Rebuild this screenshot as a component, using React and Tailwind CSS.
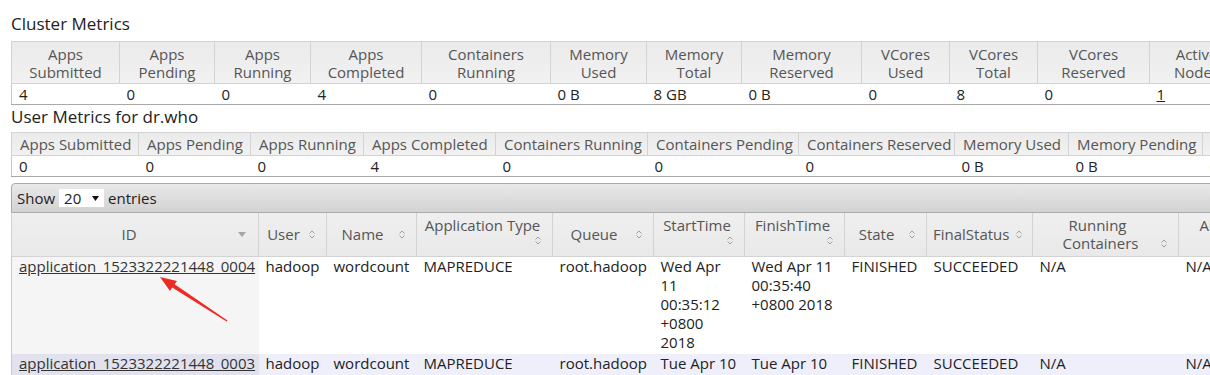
import React from "react";

const FONT = { fontFamily: '"Open Sans", "Noto Sans", sans-serif' };

const clusterCols = [
  ["Apps", "Submitted", 108],
  ["Apps", "Pending", 95],
  ["Apps", "Running", 96],
  ["Apps", "Completed", 111],
  ["Containers", "Running", 129],
  ["Memory", "Used", 96],
  ["Memory", "Total", 95],
  ["Memory", "Reserved", 120],
  ["VCores", "Used", 88],
  ["VCores", "Total", 88],
  ["VCores", "Reserved", 112],
  ["Active", "Nodes", 94],
  ["Decommissioned", "Nodes", 150],
  ["Lost", "Nodes", 90],
];
const clusterVals = ["4", "0", "0", "4", "0", "0 B", "8 GB", "0 B", "0", "8", "0", "1", "0", "0"];

const userCols = [
  ["Apps Submitted", 127],
  ["Apps Pending", 112],
  ["Apps Running", 113],
  ["Apps Completed", 132],
  ["Containers Running", 152],
  ["Containers Pending", 151],
  ["Containers Reserved", 156],
  ["Memory Used", 114],
  ["Memory Pending", 134],
  ["Memory Reserved", 150],
];
const userVals = ["0", "0", "0", "4", "0", "0", "0", "0 B", "0 B", "0 B"];

// kind: "line" text + icon on one row, "wrap" text then icon bottom-right, "two" two lines with icon on 2nd
const appCols = [
  { label: "ID", w: 247, kind: "id" },
  { label: "User", w: 68, kind: "line" },
  { label: "Name", w: 90, kind: "line" },
  { label: "Application Type", w: 136, kind: "wrap" },
  { label: "Queue", w: 101, kind: "line" },
  { label: "StartTime", w: 91, kind: "wrap" },
  { label: "FinishTime", w: 100, kind: "wrap" },
  { label: "State", w: 82, kind: "line" },
  { label: "FinalStatus", w: 106, kind: "line" },
  { label: ["Running", "Containers"], w: 146, kind: "two" },
  { label: ["Allocated CPU", "VCores"], w: 156, kind: "two" },
  { label: ["Allocated", "Memory MB"], w: 130, kind: "two" },
];

const apps = [
  {
    id: "application_1523322221448_0004",
    start: ["Wed Apr", "11", "00:35:12", "+0800", "2018"],
    finish: ["Wed Apr 11", "00:35:40", "+0800 2018"],
  },
  {
    id: "application_1523322221448_0003",
    start: ["Tue Apr 10"],
    finish: ["Tue Apr 10"],
  },
];

const sum = (arr) => arr.reduce((s, x) => s + x, 0);

function SortIcon() {
  return (
    <svg width="8" height="11" viewBox="0 0 8 11" className="shrink-0">
      <path d="M1.5 4.5 L4 2 L6.5 4.5 M1.5 6.5 L4 9 L6.5 6.5" fill="none" stroke="#a0a0a0" strokeWidth="1" />
    </svg>
  );
}

function HeadCell({ col }) {
  if (col.kind === "id") {
    return (
      <div className="flex items-center h-full pl-2 pr-[12px]">
        <span className="flex-1 text-center">{col.label}</span>
        <svg width="8" height="5" viewBox="0 0 8 5" className="shrink-0">
          <path d="M0 0 L8 0 L4 5 Z" fill="#a5a5a5" />
        </svg>
      </div>
    );
  }
  if (col.kind === "line") {
    return (
      <div className="flex items-center h-full pl-[6px] pr-[10px] gap-[6px]">
        <span className="flex-1 text-center whitespace-nowrap">{col.label}</span>
        <SortIcon />
      </div>
    );
  }
  if (col.kind === "wrap") {
    return (
      <div className="flex flex-col h-full pl-[6px] pr-[10px] pt-[3px]">
        <span className="text-center whitespace-nowrap">{col.label}</span>
        <span className="self-end mt-[1px]">
          <SortIcon />
        </span>
      </div>
    );
  }
  return (
    <div className="flex flex-col justify-center h-full pl-2 pr-[10px]">
      <span className="text-center pr-[14px] whitespace-nowrap">{col.label[0]}</span>
      <div className="flex items-center">
        <span className="flex-1 text-center whitespace-nowrap">{col.label[1]}</span>
        <SortIcon />
      </div>
    </div>
  );
}

function RedArrow() {
  return (
    <svg
      width="240"
      height="330"
      viewBox="0 0 240 330"
      className="absolute left-0 top-0 pointer-events-none"
    >
      <polygon
        points="160,277 177,281 174.6,284.3 227.4,320.5 226.6,321.5 172.2,287.6 170,291"
        fill="#ee2a24"
      />
    </svg>
  );
}

const cell = "align-top pl-[7px] pb-[2px] leading-[19px]";

export default function App() {
  return (
    <div className="relative w-[1210px] h-[375px] overflow-hidden bg-white text-[#222] text-[15px]" style={FONT}>
      <div className="pl-[11px] pt-[12px] w-[1600px]">
        <h2 className="text-[17px] leading-[24px] text-[#222] h-[29px]">Cluster Metrics</h2>

        <table
          className="table-fixed border-collapse border border-[#c9c9c9]"
          style={{ width: sum(clusterCols.map((c) => c[2])) }}
        >
          <colgroup>
            {clusterCols.map((c, i) => (
              <col key={i} style={{ width: c[2] }} />
            ))}
          </colgroup>
          <thead>
            <tr className="bg-gradient-to-b from-[#ebebeb] to-[#f1f1f1]">
              {clusterCols.map(([a, b], i) => (
                <th
                  key={i}
                  className="border border-[#d3d3d3] font-normal text-[#555] leading-[18px] h-[42px] px-1 text-center whitespace-nowrap"
                >
                  {a}
                  <br />
                  {b}
                </th>
              ))}
            </tr>
          </thead>
          <tbody>
            <tr className="border-b border-[#a8a8a8]">
              {clusterVals.map((v, i) => (
                <td key={i} className="h-[21px] pl-[7px] leading-[19px] text-left">
                  {i === 11 ? <span className="underline">{v}</span> : v}
                </td>
              ))}
            </tr>
          </tbody>
        </table>

        <h2 className="text-[17px] leading-[24px] text-[#222] h-[27px]">User Metrics for dr.who</h2>

        <table
          className="table-fixed border-collapse border border-[#c9c9c9]"
          style={{ width: sum(userCols.map((c) => c[1])) }}
        >
          <colgroup>
            {userCols.map((c, i) => (
              <col key={i} style={{ width: c[1] }} />
            ))}
          </colgroup>
          <thead>
            <tr className="bg-gradient-to-b from-[#ebebeb] to-[#f1f1f1]">
              {userCols.map(([a], i) => (
                <th
                  key={i}
                  className="border border-[#d3d3d3] font-normal text-[#555] leading-[18px] h-[23px] pl-[8px] pr-[2px] text-left whitespace-nowrap"
                >
                  {a}
                </th>
              ))}
            </tr>
          </thead>
          <tbody>
            <tr className="border-b border-[#a8a8a8]">
              {userVals.map((v, i) => (
                <td key={i} className="h-[21px] pl-[7px] leading-[19px] text-left">
                  {v}
                </td>
              ))}
            </tr>
          </tbody>
        </table>

        <div className="mt-[6px] w-[1500px] h-[30px] rounded-t-[4px] border border-[#aaa] bg-gradient-to-b from-[#e9e9e9] to-[#d2d2d2] flex items-center pl-[5px] gap-[4px]">
          <span>Show</span>
          <div className="bg-white h-[18px] w-[45px] flex items-center justify-between px-[5px]">
            <span className="leading-[18px]">20</span>
            <svg width="7" height="5" viewBox="0 0 7 5">
              <path d="M0 0 L7 0 L3.5 5 Z" fill="#111" />
            </svg>
          </div>
          <span>entries</span>
        </div>

        <table
          className="table-fixed border-collapse border-l border-[#c9c9c9]"
          style={{ width: sum(appCols.map((c) => c.w)) }}
        >
          <colgroup>
            {appCols.map((c, i) => (
              <col key={i} style={{ width: c.w }} />
            ))}
          </colgroup>
          <thead>
            <tr className="bg-gradient-to-b from-[#efefef] to-[#e9e9e9]">
              {appCols.map((c, i) => (
                <th
                  key={i}
                  className="border border-[#d3d3d3] border-t-0 font-normal text-[#555] leading-[18px] h-[43px] p-0"
                >
                  <HeadCell col={c} />
                </th>
              ))}
            </tr>
          </thead>
          <tbody>
            {apps.map((a, r) => (
              <tr key={r} className={r === 1 ? "bg-[#efeffb]" : "bg-white"}>
                <td className={`${cell} ${r === 1 ? "bg-[#e1e2ee]" : "bg-[#f5f5f5]"}`}>
                  <span className="underline text-[#333]">{a.id}</span>
                </td>
                <td className={cell}>hadoop</td>
                <td className={cell}>wordcount</td>
                <td className={cell}>MAPREDUCE</td>
                <td className={cell}>root.hadoop</td>
                <td className={cell}>
                  {a.start.map((s, i) => (
                    <div key={i}>{s}</div>
                  ))}
                </td>
                <td className={cell}>
                  {a.finish.map((s, i) => (
                    <div key={i} className="whitespace-nowrap">{s}</div>
                  ))}
                </td>
                <td className={cell}>FINISHED</td>
                <td className={cell}>SUCCEEDED</td>
                <td className={cell}>N/A</td>
                <td className={cell}>N/A</td>
                <td className={cell}>N/A</td>
              </tr>
            ))}
          </tbody>
        </table>
      </div>
      <RedArrow />
    </div>
  );
}
